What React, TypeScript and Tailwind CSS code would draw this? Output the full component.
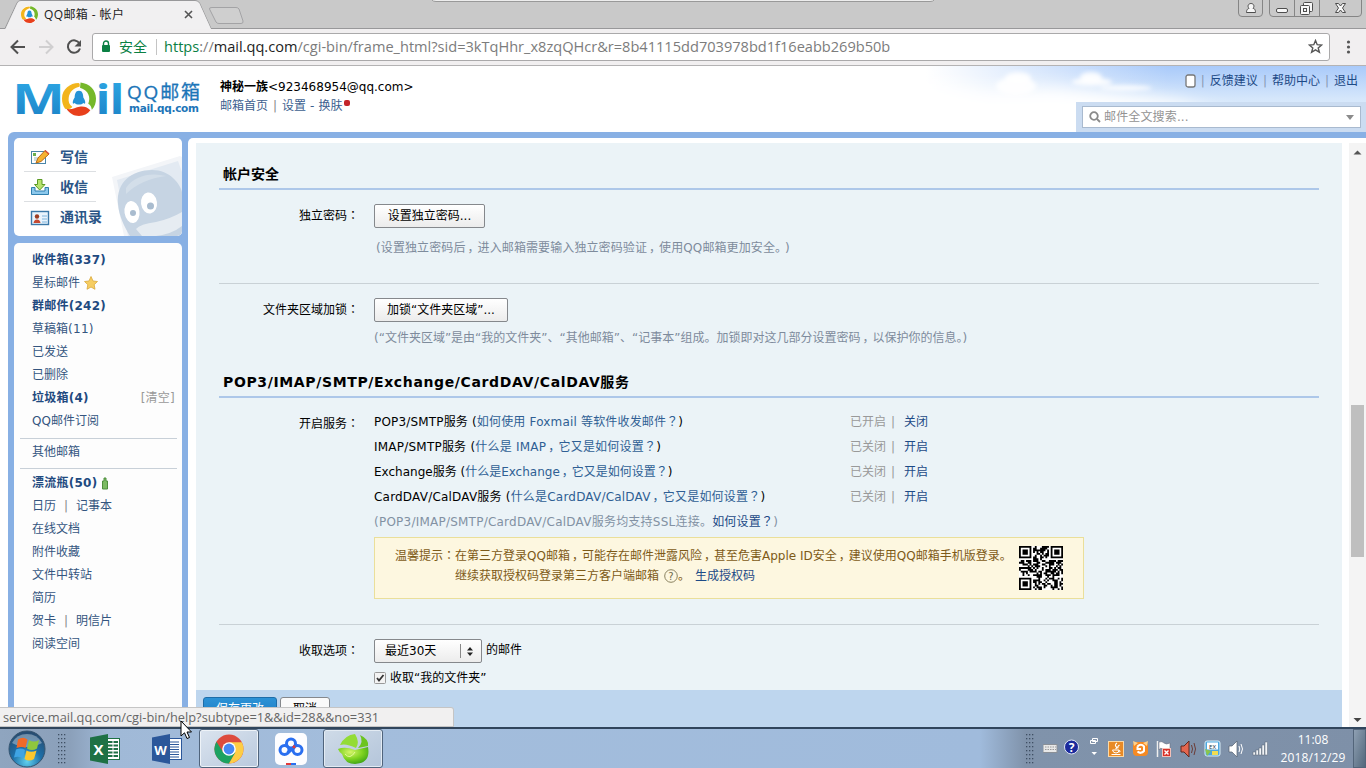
import React from 'react';

const cjk = "font-['DejaVu_Sans','Noto_Sans_CJK_SC',sans-serif]";

/* Full-width punctuation centred in its cell. */
const Zh = ({ children }: { children: string }) => (
  <>
    {children.split(/([，？：])/).map((part, i) => {
      if (part === '，') return <span key={i} className="-mr-[2px] ml-[2px]">{part}</span>;
      if (part === '？' || part === '：') return <span key={i} className="font-['Noto_Sans_CJK_JP',sans-serif] leading-none">{part}</span>;
      return part;
    })}
  </>
);

const Badge = () => (
  <g>
    <circle cx="16.500" cy="16.500" r="17" fill="#fdfdfd" />
    <path d="M16 1C8 1 0 7 0 16C0 20 1 23 3 26C6 27 9 26 10 24C7 22 6 19 6.500 15.500C7 9 12 5.500 17 4.500C17.500 3 17.500 1.500 16 1Z" fill="#f2b51c" />
    <path d="M18 0.500C27 1.500 33 8 33 16C33 20 32 24 29 27C28.500 24 27.500 22 25.500 21C28 15 26 8 17.500 5.500Z" fill="#76b82a" />
    <path d="M4.500 26C9 27.500 13 24.500 17 24C21 23.500 24 24 27.500 27.500C25 31 21 33 16.500 33C11.500 33 7 30.500 4.500 26Z" fill="#e8401c" />
    <path d="M16.500 8.500C13 8.500 12.500 12 12.300 15C10.700 17.500 10 19.500 10.700 21L12.500 20.300C13.500 22.500 19.500 22.500 20.500 20.300L22.300 21C23 19.500 22.300 17.500 20.700 15C20.500 12 20 8.500 16.500 8.500Z" fill="#2492d6" />
  </g>
);

const TabStrip = () => (
  <div className="relative flex h-[29px] shrink-0 bg-[#c9c9c9]">
    <svg className="absolute left-0 top-0" width="1366" height="29">
      <path d="M0 28.500H5L17 3Q18 0.500 21 0.500H195Q198 0.500 199.500 3L211 28.500H1366" fill="none" stroke="#98989a" />
      <path d="M5.500 29L17.500 3Q18.500 1 21 1H195Q198 1 199.500 3.500L211 29Z" fill="#f1f0f1" />
      <path d="M212 7.500H236Q238 7.500 239 9L243 21Q243.500 23.500 241 23.500H219Q217 23.500 216 22L209.500 9Q209 7.500 212 7.500Z" fill="#cfcfcf" stroke="#a3a3a5" />
      <path d="M432 -1V0Q433 1.500 436 1.500H930Q933 1.500 934 0V-1Z" fill="#ededed" stroke="#999" />
      <g fill="#c9c9c9" stroke="#858585">
        <path d="M1238.500 -1V13Q1238.500 16.500 1242 16.500H1259Q1262.500 16.500 1262.500 13V-1" />
        <path d="M1269.500 -1V13Q1269.500 16.500 1273 16.500H1358Q1361.500 16.500 1361.500 13V-1M1294.500 0V16M1319.500 0V16" />
      </g>
      <g fill="#f7f7f7" stroke="#4d4d4d">
        <path d="M1246.500 12.500C1246.500 9 1248.500 8.500 1249 8.500C1247 6 1248.500 3.500 1251 3.500S1255 6 1253 8.500C1254 8.500 1255.500 9 1255.500 12.500Z" />
        <rect x="1276.500" y="8.500" width="11" height="4" rx="1.500" />
        <rect x="1303.500" y="2.500" width="9" height="9" rx="1" />
        <rect x="1300.500" y="5.500" width="9" height="9" rx="1" />
        <rect x="1303.500" y="8.500" width="3" height="3" />
        <path d="M1335.500 3.500H1338.500L1340.500 6L1342.500 3.500H1345.500L1342.500 8L1345.500 12.500H1342.500L1340.500 10L1338.500 12.500H1335.500L1338.500 8Z" />
      </g>
    </svg>
    <div className="relative flex items-center pl-[21px] text-[12px] text-[#222]">
      <svg width="17" height="17" viewBox="0 0 33 33"><Badge /></svg>
      <span className="ml-[6px] w-[140px] whitespace-nowrap font-['Open_Sans','Noto_Sans_CJK_SC',sans-serif] tracking-[0.4px]">QQ邮箱 - 帐户</span>
      <svg width="9" height="9" viewBox="0 0 9 9"><path d="M1 1L8 8M8 1L1 8" stroke="#555" strokeWidth="1.600" /></svg>
    </div>
  </div>
);

const Toolbar = () => (
  <div className="flex h-[37px] shrink-0 items-center border-b border-[#b4b3b4] bg-[#f1eff0] pb-px">
    <svg className="shrink-0" width="92" height="36" fill="none" strokeWidth="2">
      <path d="M25 18H12M18 11.500L11.500 18L18 24.500" stroke="#505050" />
      <path d="M39 18H52M46 11.500L52.500 18L46 24.500" stroke="#d0cfd0" />
      <path d="M79.500 14.500A6.200 6.200 0 1 0 80 19.500" stroke="#505050" />
      <path d="M81 11V17.500H74.500Z" fill="#505050" />
    </svg>
    <div className="flex h-[28px] w-[1238px] items-center rounded-[3px] border border-[#aaa9aa] bg-white font-['Open_Sans','Noto_Sans_CJK_SC',sans-serif] text-[14px]">
      <svg className="ml-[8px]" width="10" height="13"><rect x="1" y="5" width="8" height="7" rx="1" fill="#0b8043" /><path d="M2.500 6V3.500A2.500 2.500 0 0 1 7.500 3.500V6" fill="none" stroke="#0b8043" strokeWidth="1.400" /></svg>
      <span className="ml-[8px] text-[#0b8043]">安全</span>
      <i className="ml-[9px] h-[16px] w-px bg-[#c4c4c4]" />
      <span className="-mt-px ml-[7px] whitespace-nowrap text-[14.58px] leading-[20px] text-[#7c7c7c]"><span className="text-[#0b8043]">https</span>://<span className="text-[#222]">mail.qq.com</span>/cgi-bin/frame_html?sid=3kTqHhr_x8zqQHcr&amp;r=8b41115dd703978bd1f16eabb269b50b</span>
      <svg className="ml-auto mr-[6px]" width="15" height="15" viewBox="0 0 15 15"><path d="M7.500 1.500L9.200 5.700L13.700 6L10.200 8.900L11.400 13.300L7.500 10.900L3.600 13.300L4.800 8.900L1.300 6L5.800 5.700Z" fill="none" stroke="#555" strokeWidth="1.400" /></svg>
    </div>
    <svg className="ml-[16px]" width="5" height="16" fill="#555"><circle cx="2.500" cy="3" r="1.600" /><circle cx="2.500" cy="8" r="1.600" /><circle cx="2.500" cy="13" r="1.600" /></svg>
  </div>
);

const Sky = () => (
  <svg className="absolute right-0 top-0" width="440" height="66">
    <defs>
      <linearGradient id="sky" x1="0" x2="0" y1="0" y2="1"><stop offset="0" stopColor="#a9cafa" /><stop offset=".5" stopColor="#d6e7fb" /><stop offset="1" stopColor="#e3effa" /></linearGradient>
      <linearGradient id="skyFade" x1="0" x2="1"><stop offset="0" stopColor="#fff" /><stop offset=".25" stopColor="#fff" stopOpacity=".55" /><stop offset=".55" stopColor="#fff" stopOpacity="0" /></linearGradient>
      <filter id="soft"><feGaussianBlur stdDeviation="2" /></filter>
      <filter id="haze" x="-20%" y="-50%" width="140%" height="200%"><feGaussianBlur stdDeviation="8" /></filter>
    </defs>
    <rect width="440" height="66" fill="url(#sky)" />
    <rect width="440" height="66" fill="url(#skyFade)" />
    <path d="M-20 14L60 26L130 22L250 34L330 58L300 100H-20Z" fill="#fff" filter="url(#haze)" />
    <g fill="#fff" fillOpacity=".9" filter="url(#soft)">
      <ellipse cx="92" cy="12" rx="13" ry="6" /><ellipse cx="90" cy="20" rx="20" ry="9" />
      <ellipse cx="165" cy="11" rx="11" ry="5" /><ellipse cx="166" cy="16" rx="20" ry="4" /><ellipse cx="200" cy="22" rx="26" ry="2.500" />
    </g>
  </svg>
);

const link = 'text-[#1d4a86]';

const MailHeader = () => (
  <header className={`relative flex h-[66px] shrink-0 bg-white text-[12px] ${cjk}`}>
    <Sky />
    <svg className="relative ml-[14px] shrink-0" width="190" height="66">
      <defs><linearGradient id="logo" x1="0" x2="0" y1="0" y2="1"><stop offset="0" stopColor="#31aeea" /><stop offset="1" stopColor="#1a7fc4" /></linearGradient></defs>
      <g fill="url(#logo)" className="font-['Open_Sans',sans-serif] font-bold">
        <text x="-2" y="47.500" fontSize="41" textLength="53" lengthAdjust="spacingAndGlyphs">M</text>
        <text x="81.500" y="47.500" fontSize="42" textLength="15" lengthAdjust="spacingAndGlyphs">i</text>
        <text x="95.500" y="47.500" fontSize="42" textLength="15" lengthAdjust="spacingAndGlyphs">l</text>
      </g>
      <g transform="translate(48 16) scale(1.030)"><Badge /></g>
      <g fill="#1c75b8">
        <text x="113" y="33" fontSize="19" textLength="73" stroke="#1c75b8" strokeWidth=".3" className="font-['Open_Sans','Noto_Sans_CJK_SC',sans-serif]">QQ邮箱</text>
        <text x="115" y="45.500" fontSize="10.500" fontWeight="700" textLength="70" className="font-['DejaVu_Sans',sans-serif]">mail.qq.com</text>
      </g>
    </svg>
    <div className="relative ml-[16px] mt-[12px] whitespace-nowrap leading-[19px]">
      <div className="text-black"><b>神秘一族</b>&lt;923468954@qq.com&gt;</div>
      <div className="flex text-[#3d5f8f]">邮箱首页<span className="mx-[5px] text-[#888]">|</span>设置<span className="mx-[4px]">-</span>换肤<i className="ml-[2px] mt-[3px] size-[6px] rounded-[2px] bg-[#c4262c]" /></div>
    </div>
    <div className="relative ml-auto flex w-[290px] flex-col">
      <div className={`flex h-[30px] items-center justify-end pr-[8px] ${link}`}>
        <svg width="11" height="14"><rect x="1" y="1" width="9" height="12" rx="2" fill="#fff" stroke="#777" strokeWidth="1.300" /></svg>
        <span className="mx-[5px] text-[#8899b3]">|</span>反馈建议<span className="mx-[5px] text-[#8899b3]">|</span>帮助中心<span className="mx-[5px] text-[#8899b3]">|</span>退出
      </div>
      <div className="mt-auto flex h-[30px] items-center bg-[#cbdcf1] pl-[6px]">
        <div className="flex h-[22px] w-[279px] items-center border border-[#a9bacf] bg-white px-[6px] text-[#939393]">
          <svg width="12" height="12" fill="none" stroke="#8a8a8a" strokeWidth="1.800"><circle cx="5" cy="5" r="3.800" /><path d="M8 8L11 11" /></svg>
          <span className="ml-[3px] tracking-[0.15px]">邮件全文搜索...</span>
          <svg className="ml-auto" width="8" height="5"><path d="M0 0H8L4 5Z" fill="#8b8b8b" /></svg>
        </div>
      </div>
    </div>
  </header>
);

const Stamp = () => (
  <svg className="absolute bottom-0 right-0" width="76" height="84" viewBox="0 0 76 84">
    <path d="M6 25L74 4L76 5V84H18Z" fill="#f3f5f8" />
    <path d="M11 28L72 9L76 20V84H22Z" fill="#e3eaf2" />
    <path d="M12 52C10 30 26 18 46 18C64 18 74 32 76 40V84H24C18 74 13 64 12 52Z" fill="#c6d4e3" />
    <path d="M20 36C28 24 44 20 60 24C44 26 30 32 20 42Z" fill="#d3dee9" />
    <ellipse cx="26" cy="60" rx="7.500" ry="11" transform="rotate(-8 26 60)" fill="#fff" />
    <ellipse cx="43" cy="51" rx="8" ry="10.500" transform="rotate(-8 43 51)" fill="#fff" />
    <circle cx="27" cy="61" r="3" fill="#a9bccf" /><circle cx="44.500" cy="54" r="3.500" fill="#a9bccf" />
    <path d="M30 77Q34 72 50 70Q64 67 76 60V74Q66 82 50 84H36Z" fill="#e6ecf2" />
  </svg>
);

const WriteIcon = () => (
  <svg className="shrink-0" width="20" height="18"><rect x="1.500" y="3.500" width="14" height="12" fill="#fff" stroke="#4a86a8" /><rect x="3" y="5" width="3" height="3" fill="#6ab04c" /><path d="M4 10H9M4 12H7" stroke="#9bb" /><path d="M6 15L8 10L15 2.500L19 6L11 13.500Z" fill="#f5b22f" stroke="#b86a14" /><path d="M15 2.500L19 6" stroke="#d64f3c" strokeWidth="1.500" /></svg>
);
const ReceiveIcon = () => (
  <svg className="shrink-0" width="20" height="18"><path d="M1.500 9.500H5V13H15V9.500H18.500V16.500H1.500Z" fill="#8cc8ec" stroke="#2f7fae" /><path d="M7.500 1.500H12V6.500H15L9.700 12L4.500 6.500H7.500Z" fill="#b7e36f" stroke="#5b9a24" /></svg>
);
const ContactsIcon = () => (
  <svg className="shrink-0" width="20" height="18"><rect x="1.500" y="2.500" width="17" height="13" fill="#e9f4fd" stroke="#3b78a8" strokeWidth="1.400" /><circle cx="7" cy="7.500" r="2.200" fill="#9d3d22" /><path d="M3.500 14Q4 10.500 7 10.500T10.500 14Z" fill="#c54a32" /><path d="M12 7H17M12 10H17M12 13H17" stroke="#7fb4dc" /></svg>
);

const Row = ({ bold, children }: { bold?: boolean; children: React.ReactNode }) => (
  <div className={`flex h-[23px] items-center whitespace-nowrap ${bold ? 'font-bold tracking-[0.25px] text-[#1f4a80]' : 'text-[#34557f]'}`}>{children}</div>
);
const Bar = () => <span className="mx-[8px] text-[#888]">|</span>;

const Sidebar = () => (
  <aside className={`flex w-[168px] shrink-0 flex-col text-[12px] ${cjk}`}>
    <nav className="relative h-[98px] shrink-0 overflow-hidden rounded-[5px] bg-white pl-[10px] pt-[4px] text-[14px] font-bold text-[#2a5586]">
      <Stamp />
      {[
        { label: '写信', icon: <WriteIcon /> },
        { label: '收信', icon: <ReceiveIcon /> },
        { label: '通讯录', icon: <ContactsIcon /> },
      ].map((n, i) => (
        <div key={n.label} className={`relative flex h-[30px] w-[72px] items-center whitespace-nowrap pl-[6px] pt-px ${i < 2 ? 'border-b border-[#dcdfe2]' : ''}`}>
          {n.icon}<span className="ml-[10px]">{n.label}</span>
        </div>
      ))}
    </nav>
    <nav className="mt-[7px] flex-1 rounded-t-[5px] bg-[#fdfdfd] pl-[18px] pr-[5px] pt-[5px]">
      <Row bold>收件箱(337)</Row>
      <Row>星标邮件<svg className="ml-[4px]" width="14" height="14" viewBox="0 0 14 14"><path d="M7 .5L9 5L13.500 5.500L10.200 8.700L11 13.300L7 11L3 13.300L3.800 8.700L.5 5.500L5 5Z" fill="#f6cd61" stroke="#d9a83b" strokeWidth=".8" /></svg></Row>
      <Row bold>群邮件(242)</Row>
      <Row>草稿箱<span className="tracking-[0.3px]">(11)</span></Row>
      <Row>已发送</Row>
      <Row>已删除</Row>
      <Row bold>垃圾箱(4)<span className="ml-auto mr-[2px] font-normal text-[#999]">[清空]</span></Row>
      <Row>QQ邮件订阅</Row>
      <hr className="-ml-[12px] mb-px mt-[6px] border-[#c8d0d8]" />
      <Row>其他邮箱</Row>
      <hr className="-ml-[12px] mb-[2px] mt-[5px] border-[#c8d0d8]" />
      <Row bold>漂流瓶(50)<svg className="ml-[4px]" width="8" height="14"><path d="M3 2H5V5H6.500V13H1.500V5H3Z" fill="#7dbb64" stroke="#4f8f3e" /></svg></Row>
      <Row>日历<Bar />记事本</Row>
      <Row>在线文档</Row>
      <Row>附件收藏</Row>
      <Row>文件中转站</Row>
      <Row>简历</Row>
      <Row>贺卡<Bar />明信片</Row>
      <Row>阅读空间</Row>
    </nav>
  </aside>
);

const services = [
  { name: 'POP3/SMTP服务', help: '如何使用 Foxmail 等软件收发邮件？', state: '已开启', action: '关闭', spacing: 'tracking-[0.17px]' },
  { name: 'IMAP/SMTP服务', help: '什么是 IMAP，它又是如何设置？', state: '已关闭', action: '开启', spacing: 'tracking-[0.22px]' },
  { name: 'Exchange服务', help: '什么是Exchange，它又是如何设置？', state: '已关闭', action: '开启', spacing: 'tracking-[0px]' },
  { name: 'CardDAV/CalDAV服务', help: '什么是CardDAV/CalDAV，它又是如何设置？', state: '已关闭', action: '开启', spacing: 'tracking-[0.2px]' },
];

const Label = ({ children }: { children: string }) => (
  <div className="h-[24px] w-[140px] shrink-0 whitespace-nowrap text-right leading-[24px] text-black"><Zh>{`${children}：`}</Zh></div>
);
const Button = ({ className, children }: { className: string; children: React.ReactNode }) => (
  <button className={`h-[24px] whitespace-nowrap rounded-[2px] border border-[#85888c] bg-gradient-to-b from-white to-[#ececec] text-center leading-[22px] text-black ${className}`}>{children}</button>
);

function qrPath() {
  let d = '';
  let seed = 20181;
  const n = 25;
  const finder = (x: number, y: number, ox: number, oy: number) => {
    const a = x - ox, b = y - oy;
    if (a < -1 || b < -1 || a > 7 || b > 7) return -1;
    if (a < 0 || b < 0 || a > 6 || b > 6) return 0;
    const r = Math.max(Math.abs(a - 3), Math.abs(b - 3));
    return r === 2 ? 0 : 1;
  };
  for (let y = 0; y < n; y++) {
    for (let x = 0; x < n; x++) {
      seed = (seed * 1103515245 + 12345) % 2147483648;
      const f = Math.max(finder(x, y, 0, 0), finder(x, y, 18, 0), finder(x, y, 0, 18));
      const on = f >= 0 ? f === 1 : (seed >> 16) % 100 < 55;
      if (on) d += `M${x} ${y}h1.030v1.030h-1.030z`;
    }
  }
  return d;
}

const Content = () => (
  <main className={`flex min-w-0 flex-1 flex-col bg-[#ebf3f7] text-[12px] ${cjk}`}>
    <div className="h-[547px] shrink-0 overflow-hidden pl-[23px] pr-[23px] pt-[19px]">
      <h2 className="h-[28px] border-b-2 border-[#adc7e9] pl-[4px] text-[14px] font-bold leading-[25px] text-black">帐户安全</h2>
      <div className="mt-[14px] flex"><Label>独立密码</Label><Button className="ml-[15px] w-[111px]">设置独立密码...</Button></div>
      <p className="ml-[157px] mt-[8px] h-[24px] whitespace-nowrap leading-[24px] tracking-[0.1px] text-[#7e8b9c]"><Zh>(设置独立密码后，进入邮箱需要输入独立密码验证，使用QQ邮箱更加安全。</Zh><span className="ml-[4px]">)</span></p>
      <hr className="mt-[23px] border-[#c9d1d6]" />
      <div className="mt-[14px] flex"><Label>文件夹区域加锁</Label><Button className="ml-[15px] w-[134px]">加锁“文件夹区域”...</Button></div>
      <p className="ml-[155px] mt-[4px] h-[24px] whitespace-nowrap leading-[24px] text-[#7e8b9c]"><Zh>(“文件夹区域”是由“我的文件夹”、“其他邮箱”、“记事本”组成。加锁即对这几部分设置密码，以保护你的信息。)</Zh></p>
      <h2 className="mt-[20px] h-[28px] border-b-2 border-[#adc7e9] pl-[4px] text-[14px] font-bold leading-[25px] tracking-[0.63px] text-black">POP3/IMAP/SMTP/Exchange/CardDAV/CalDAV服务</h2>
      <div className="mt-[11px] flex">
        <div className="mt-[3px]"><Label>开启服务</Label></div>
        <div className="ml-[15px] w-[710px]">
          {services.map((s) => (
            <div key={s.name} className="flex h-[25px] items-center whitespace-nowrap text-black">
              <div className={`w-[476px] ${s.spacing}`}>{s.name} (<span className="text-[#2f5f94]"><Zh>{s.help}</Zh></span>)</div>
              <span className="text-[#999]">{s.state}</span><span className="mx-[5px] text-[#999]">|</span><span className={`ml-[4px] ${link}`}>{s.action}</span>
            </div>
          ))}
          <div className="h-[25px] whitespace-nowrap leading-[27px] tracking-[0.23px] text-[#8291a3]">(POP3/IMAP/SMTP/CardDAV/CalDAV服务均支持SSL连接。<span className={link}><Zh>如何设置？</Zh></span>)</div>
          <div className="mt-[3px] flex h-[62px] border border-[#eadf9a] bg-[#fdf7e0] pl-[20px] text-[#7d5a17]">
            <div className="w-[624px] whitespace-nowrap pt-[8px] leading-[20px]">
              <div className="h-[20px]"><Zh>温馨提示：在第三方登录QQ邮箱，可能存在邮件泄露风险，甚至危害Apple ID安全，建议使用QQ邮箱手机版登录。</Zh></div>
              <div className="flex items-center pl-[60px]">继续获取授权码登录第三方客户端邮箱
                <svg className="ml-[5px]" width="14" height="14"><circle cx="7" cy="7" r="6.300" fill="none" stroke="#8a8260" /><text x="7" y="11" textAnchor="middle" fontSize="10" fill="#6f6849">?</text></svg>。<span className={`ml-[5px] ${link}`}>生成授权码</span>
              </div>
            </div>
            <svg className="mt-[8px]" width="44" height="44" viewBox="0 0 25 25"><rect width="25" height="25" fill="#fff" /><path d={qrPath()} fill="#000" /></svg>
          </div>
        </div>
      </div>
      <hr className="mt-[25px] border-[#c9d1d6]" />
      <div className="mt-[14px] flex">
        <Label>收取选项</Label>
        <div className="ml-[15px] flex h-[24px] w-[108px] items-center rounded-[2px] border border-[#85888c] bg-gradient-to-b from-white to-[#ececec] pl-[10px] text-black">
          <span className="w-[75px] whitespace-nowrap">最近30天</span><i className="h-[14px] w-px bg-[#888]" />
          <svg className="ml-[6px]" width="6" height="9"><path d="M3 0L6 3.500H0ZM3 9L6 5.500H0Z" fill="#222" /></svg>
        </div>
        <span className="ml-[4px] leading-[22px] text-black">的邮件</span>
      </div>
      <div className="ml-[155px] mt-[5px] flex h-[20px] items-center text-black">
        <svg width="12" height="12"><rect x=".5" y=".5" width="11" height="11" rx="1" fill="#f3f3f3" stroke="#999" /><path d="M3 6L5 8.500L9.500 3" fill="none" stroke="#333" strokeWidth="1.800" /></svg>
        <span className="ml-[4px]">收取“我的文件夹”</span>
      </div>
    </div>
    <div className="flex flex-1 gap-[3px] overflow-hidden bg-[#bed6ee] pl-[7px] pt-[7px]">
      <button className="h-[24px] w-[74px] rounded-[3px] border border-[#1e6da8] bg-gradient-to-b from-[#2c92d6] to-[#1c7cc2] leading-[22px] text-white">保存更改</button>
      <button className="h-[24px] w-[50px] rounded-[3px] border border-[#85888c] bg-[#fafafa] leading-[22px] text-black">取消</button>
    </div>
  </main>
);

const Scrollbar = () => (
  <svg className="ml-[7px] shrink-0" width="17" height="585">
    <rect width="17" height="585" fill="#f4f4f4" />
    <path d="M4.500 11.500H12.500L8.500 7.500Z" fill="#555" />
    <rect x="2" y="262" width="13" height="152" fill="#bfbfbf" />
    <path d="M4.500 575H12.500L8.500 579Z" fill="#444" />
  </svg>
);

const Orb = () => (
  <svg className="ml-[7px]" width="40" height="40">
    <defs>
      <radialGradient id="orb" cx=".5" cy=".85" r=".8"><stop offset="0" stopColor="#5fd0ee" /><stop offset=".5" stopColor="#1d6fa8" /><stop offset="1" stopColor="#274d72" /></radialGradient>
    </defs>
    <circle cx="20" cy="20" r="18" fill="url(#orb)" stroke="#35546f" />
    <path d="M5 14A17 17 0 0 1 35 14Q20 22 5 14Z" fill="#fff" opacity=".35" />
    <path d="M11 10.500Q16 7 20.500 10.500L18.500 19Q15 17 9.500 19Z" fill="#f06a28" />
    <path d="M22 11Q27 14 32 11L30 19.500Q25 22.500 20 19.500Z" fill="#8fc63d" />
    <path d="M9 20.500Q14 18.500 18 21L16 29.500Q12 26.500 7 28.500Z" fill="#3fa4e4" />
    <path d="M19.500 21.500Q24 24 29.500 21.500L27 30Q22 33 17.500 30Z" fill="#fbc72e" />
  </svg>
);

const OfficeIcon = ({ letter, color }: { letter: string; color: string }) => (
  <svg width="30" height="30">
    <rect x="15.500" y="4.500" width="14" height="21" fill="#fff" stroke={color} />
    <path d={letter === 'X' ? 'M18 8H28M18 11.500H28M18 15H28M18 18.500H28M18 22H28' : 'M18 8H27M18 10.500H27M18 13H27M18 15.500H27M18 18H27M18 20.500H27M18 23H27'} stroke={color} strokeWidth={letter === 'X' ? 2 : 1.200} />
    {letter === 'X' && <path d="M23 6V24" stroke="#fff" />}
    <path d="M0 3.500L18 0V30L0 26.500Z" fill={color} />
    <text x="8.500" y="20.500" textAnchor="middle" fontSize={letter === 'X' ? 15 : 13} fontWeight="700" fill="#fff" className="font-['Open_Sans',sans-serif]">{letter}</text>
  </svg>
);

const ChromeIcon = () => (
  <svg width="30" height="30" viewBox="0 0 30 30">
    <circle cx="15" cy="15" r="14.500" fill="#dd4b3e" />
    <path d="M15 15L2.450 7.700A14.500 14.500 0 0 0 15 29.500L21.500 18.500Z" fill="#1ca261" />
    <path d="M15 8.200H27.800A14.500 14.500 0 0 1 15 29.500L21.300 18.500Z" fill="#fdcd45" />
    <path d="M2.450 7.700L9 18L15 15V8.200Z" fill="#dd4b3e" />
    <circle cx="15" cy="15" r="6.800" fill="#fff" /><circle cx="15" cy="15" r="5.400" fill="#4687f4" />
  </svg>
);

const Grip = () => (
  <svg width="10" height="32" fill="#3f4f63">
    {[0, 1, 2, 3, 4, 5, 6, 7].map((r) => [0, 1, 2].map((c) => <rect key={`${r}${c}`} x={1 + c * 3} y={1 + r * 4} width="1.300" height="1.300" />))}
  </svg>
);

const Tray = () => (
  <svg className="ml-[8px]" width="230" height="40">
    <rect x="0" y="15.500" width="14" height="8" fill="#e8e8e8" stroke="#8a8f96" /><path d="M2 18H13M2 20.500H13" stroke="#999" strokeDasharray="1.500 1" />
    <circle cx="28.500" cy="18" r="7" fill="#1b2a9c" stroke="#dfe5f5" /><text x="28.500" y="22.500" textAnchor="middle" fontSize="12" fontWeight="700" fill="#fff">?</text>
    <path d="M49.500 9.500H54.500V12.500H49.500ZM47.500 11.500H52.500V14.500H47.500Z" fill="#8494aa" stroke="#fff" /><path d="M48.500 23H54L51.200 26Z" fill="#fff" />
    <rect x="65.500" y="12.500" width="15" height="15" fill="#e88a26" stroke="#fbd9a6" />
    <path d="M74 14Q71.500 16 73 17.500T72.500 20M76.500 16Q74 17.500 75 19.500" stroke="#fff" fill="none" strokeWidth="1.100" /><path d="M69.500 21H76Q76 24 73 24Q70 24 69.500 21ZM76 21.500Q78.500 21.500 76 23.500M68.500 25.500H77.500" fill="none" stroke="#fff" />
    <rect x="90" y="13" width="15" height="14" rx="4" fill="#f58a23" /><path d="M94.500 17.500Q98 14 101 17.500V22Q98 25.500 94.500 22.500M94.500 17.500V20H98" fill="none" stroke="#fff" strokeWidth="2" /><path d="M90 12L95 14L91 17ZM105 12L100 14L104 17Z" fill="#ffd08a" />
    <path d="M114.500 12V28" stroke="#eee" strokeWidth="1.500" /><path d="M116 13Q119 12 121 14T127 14V21Q123 22 120 20T116 21Z" fill="#fff" stroke="#667" strokeWidth=".5" /><rect x="119.500" y="19.500" width="8" height="8" fill="#d8322a" stroke="#f3c0b8" /><path d="M121.500 21.500L125.500 25.500M125.500 21.500L121.500 25.500" stroke="#fff" strokeWidth="1.400" />
    <path d="M138 17H141L146 12V28L141 23H138Z" fill="#e3664f" stroke="#5f2920" /><path d="M148.500 16Q150.500 20 148.500 24M151 14Q154 20 151 26" fill="none" stroke="#6b3b35" />
    <rect x="162" y="12" width="15" height="15" rx="2" fill="#4da6dd" stroke="#d7edf8" /><rect x="164" y="13.500" width="11" height="7" fill="#fff" /><text x="169.500" y="19.500" fontSize="6" textAnchor="middle" fill="#234">EX</text><path d="M162 20L168 22L164 27Z" fill="#8ac54b" /><rect x="169" y="22" width="6" height="4" fill="#f2dc52" />
    <path d="M186 17H189L194 12V28L189 23H186Z" fill="#fff" stroke="#54606f" strokeWidth=".7" /><path d="M196 17Q197.500 20 196 23M198 15Q201 20 198 25" fill="none" stroke="#fff" />
    <g fill="#f2f4f7" stroke="#5a6675" strokeWidth=".5"><rect x="210" y="23" width="2.500" height="3" /><rect x="213" y="21" width="2.500" height="5" /><rect x="216" y="19" width="2.500" height="7" /><rect x="219" y="16" width="2.500" height="10" /><rect x="222" y="13" width="2.500" height="13" /></g>
  </svg>
);

const Taskbar = () => (
  <footer className="flex h-[41px] shrink-0 items-center border-t-2 border-[#30455c] bg-[linear-gradient(90deg,#8fa5bf_0,#8ba0ba_70px,#a0b9d7_110px,#a3bddc_350px,#a0bbdc_980px,#8093ab_1025px,#7e90a8_100%)]">
    <Orb />
    <div className="ml-[10px]"><Grip /></div>
    <div className="ml-[23px]"><OfficeIcon letter="X" color="#1e7145" /></div>
    <div className="ml-[32px]"><OfficeIcon letter="W" color="#2b579a" /></div>
    <div className="ml-[17px] flex h-[39px] w-[60px] items-center justify-center rounded-[3px] border border-[#50647c] bg-gradient-to-br from-[#dbe4ef] to-[#b9c9dd] shadow-[inset_0_0_0_1px_#eef3f8]"><ChromeIcon /></div>
    <svg className="ml-[16px]" width="32" height="32">
      <rect width="32" height="32" rx="5" fill="#fdfdff" />
      <g fill="none" strokeWidth="3"><circle cx="16" cy="10.500" r="4.500" stroke="#2a6ff0" /><circle cx="9.500" cy="17" r="4.500" stroke="#2a6ff0" /><circle cx="22.500" cy="17" r="4.500" stroke="#2a6ff0" /><path d="M12.500 20L19.500 14" stroke="#2a6ff0" /><path d="M18.500 15A4.500 4.500 0 0 1 20 13" stroke="#e23b3b" /></g>
      <rect x="11" y="30" width="5" height="2" fill="#e23b3b" /><rect x="16" y="30" width="5" height="2" fill="#2a6ff0" />
    </svg>
    <div className="ml-[16px] flex h-[39px] w-[60px] items-center justify-center rounded-[3px] border border-[#50647c] bg-gradient-to-br from-[#cfdbe8] to-[#b4c5da] shadow-[inset_0_0_0_1px_#e3ebf3]">
      <svg width="34" height="32">
        <defs><radialGradient id="lime" cx=".4" cy=".3" r=".8"><stop offset="0" stopColor="#d6f56a" /><stop offset=".5" stopColor="#7fd321" /><stop offset="1" stopColor="#2f9a14" /></radialGradient></defs>
        <path d="M2 16Q9 13 19 17L32 14Q35 30 19 31Q9 31 6 21Q3 19 2 16Z" fill="url(#lime)" />
        <path d="M4 12Q9 2 19 1Q24 9 20 15Q10 10 4 12Z" fill="#93dc35" />
        <path d="M24 2Q33 6 32 13L22 15Q28 9 24 2Z" fill="#6cc420" />
        <path d="M9 21Q14 27 19 19" stroke="#e4fa9a" fill="none" />
      </svg>
    </div>
    <div className="ml-auto"><Grip /></div>
    <Tray />
    <div className="w-[80px] whitespace-nowrap text-center font-['Open_Sans',sans-serif] text-[12px] leading-[18px] text-white"><div>11:08</div><div className="tracking-[0.15px]">2018/12/29</div></div>
    <div className="h-full w-[13px] border border-[#53657a] bg-gradient-to-br from-[#8fa0b3] to-[#53687c]" />
  </footer>
);

export default function App() {
  return (
    <div className="relative flex h-[768px] w-[1366px] flex-col overflow-hidden bg-white">
      <TabStrip />
      <Toolbar />
      <MailHeader />
      <div className="ml-[8px] flex min-h-0 flex-1 rounded-tl-[6px] bg-[#88b0e4] pl-[6px] pt-[6px]">
        <Sidebar />
        <div className="ml-[6px] flex min-w-0 flex-1 rounded-tl-[5px] bg-white pl-[8px] pt-[5px]">
          <Content />
          <Scrollbar />
        </div>
      </div>
      <Taskbar />
      <div className="absolute left-0 top-[707px] h-[20px] w-[454px] rounded-tr-[3px] border border-l-0 border-[#c5c5c5] bg-[#f1f0f0] pl-[3px] font-['Open_Sans',sans-serif] text-[12.8px] leading-[19px] text-[#666]">service.mail.qq.com/cgi-bin/help?subtype=1&amp;&amp;id=28&amp;&amp;no=331</div>
      <svg className="absolute left-[180px] top-[720px]" width="13" height="20"><path d="M1 1V16L4.500 12.800L7 18.500L9.500 17.500L7 12H11.500Z" fill="#fff" stroke="#000" /></svg>
    </div>
  );
}
